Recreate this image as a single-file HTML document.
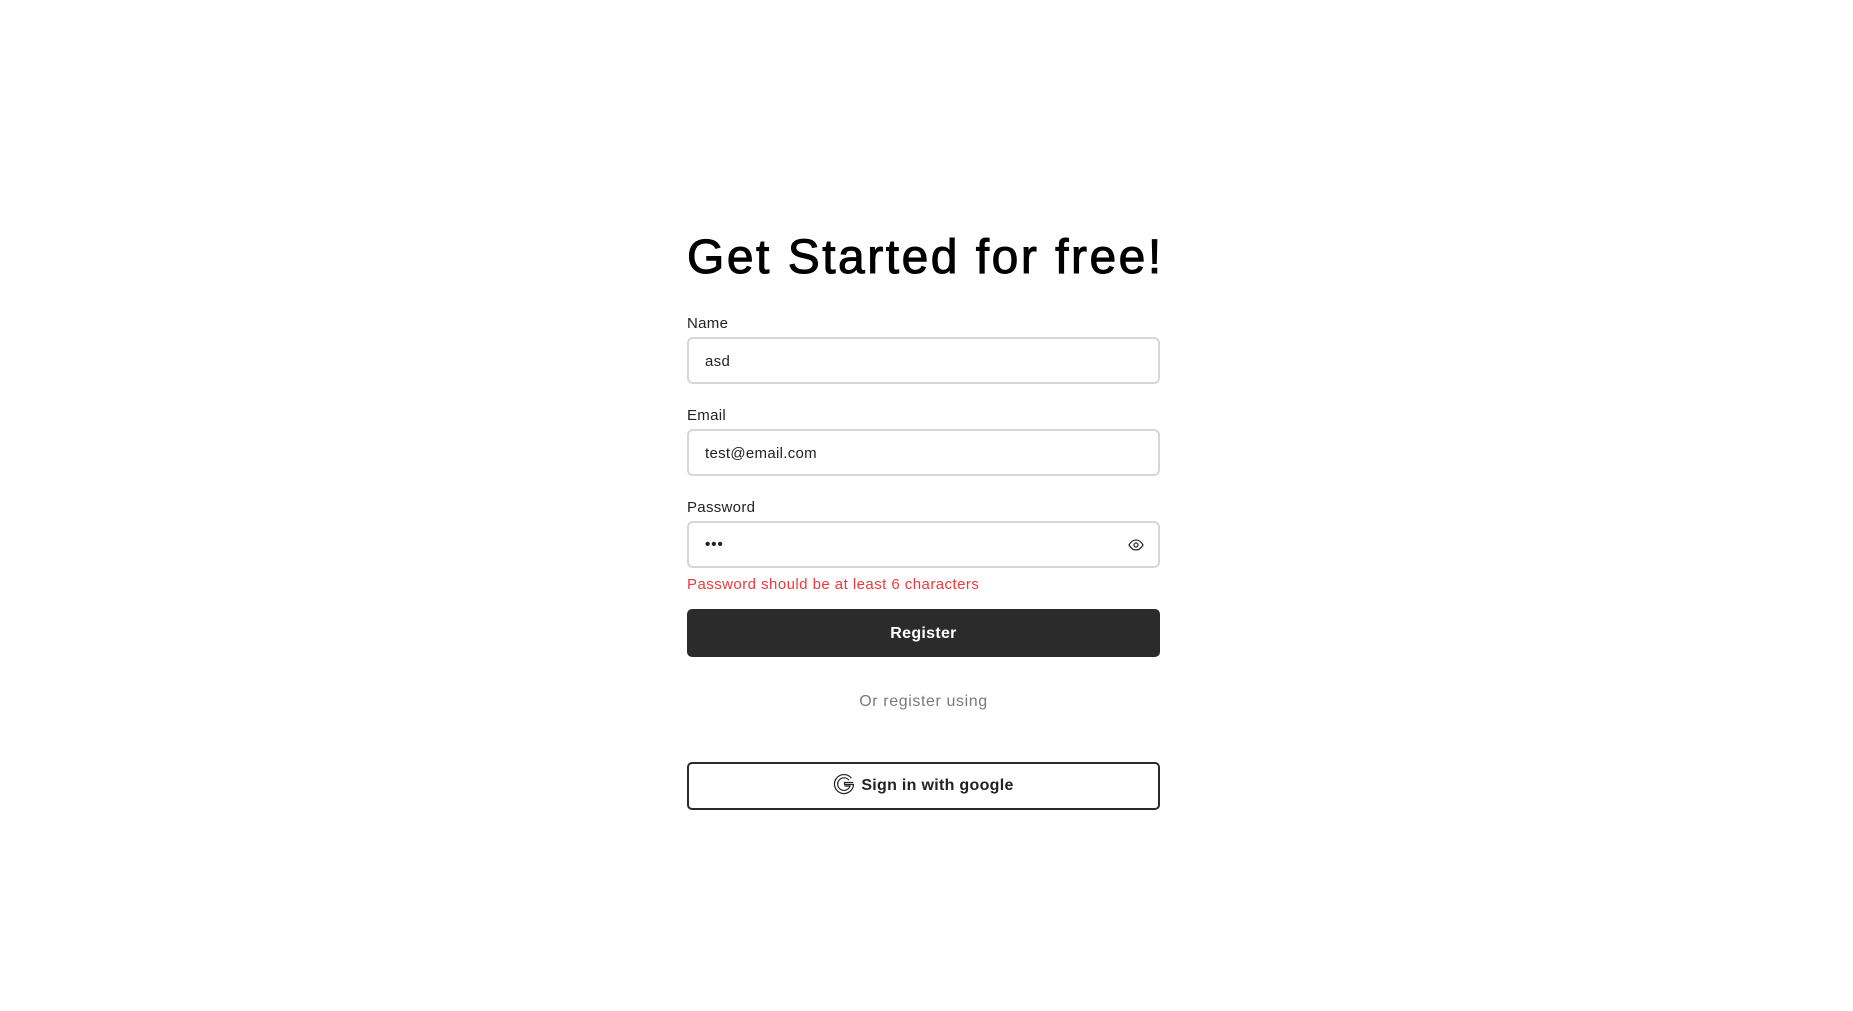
<!DOCTYPE html>
<html><head><meta charset="utf-8"><style>
html,body{margin:0;padding:0;background:#fff;width:1853px;height:1011px;overflow:hidden;font-family:"Liberation Sans",sans-serif;}
h1{position:absolute;left:687px;top:230px;margin:0;font-size:48px;font-weight:normal;color:#000;line-height:56px;letter-spacing:2.5px;white-space:nowrap;-webkit-text-stroke:1px #000;}
.lbl{position:absolute;left:687px;font-size:15px;color:#222;letter-spacing:0.3px;}
.in{position:absolute;left:687px;width:469px;height:43px;border:2px solid #d6d6d6;border-radius:6px;box-sizing:content-box;}
.in span{position:absolute;left:16px;top:14px;font-size:15px;color:#222;letter-spacing:0.3px;}
.err{position:absolute;left:687px;top:576px;font-size:15px;color:#f0383a;letter-spacing:0.45px;}
.reg{position:absolute;left:687px;top:609px;width:473px;height:48px;background:#2b2b2b;border-radius:5px;color:#fff;font-weight:bold;font-size:16px;text-align:center;line-height:49px;letter-spacing:0.3px;}
.or{position:absolute;left:687px;width:473px;top:693px;text-align:center;color:#7a7a7a;font-size:16px;letter-spacing:0.6px;}
.g{position:absolute;left:687px;top:762px;width:469px;height:44px;border:2px solid #2b2b2b;border-radius:5px;text-align:center;line-height:44px;font-weight:bold;font-size:16px;color:#222;letter-spacing:0.3px;}
.g svg{vertical-align:middle;margin-right:6px;position:relative;top:-2px}
</style></head><body>
<h1>Get Started for free!</h1>
<div class="lbl" style="top:315px">Name</div>
<div class="in" style="top:337px"><span>asd</span></div>
<div class="lbl" style="top:407px">Email</div>
<div class="in" style="top:429px"><span>test@email.com</span></div>
<div class="lbl" style="top:499px">Password</div>
<div class="in" style="top:521px"><span style="top:13px;font-weight:bold;letter-spacing:1px">•••</span>
<svg style="position:absolute;right:14px;top:16px" width="16" height="12" viewBox="0 0 16 12"><path d="M1 6C3 2.5 5.5 1 8 1s5 1.5 7 5c-2 3.5-4.5 5-7 5S3 9.5 1 6z" fill="none" stroke="#333" stroke-width="1.3"/><circle cx="8" cy="6" r="2" fill="none" stroke="#333" stroke-width="1.3"/></svg></div>
<div class="err">Password should be at least 6 characters</div>
<div class="reg">Register</div>
<div class="or">Or register using</div>
<div class="g"><svg width="22" height="22" viewBox="0 0 22 22"><path d="M18.5 5.2A9.5 9.5 0 1 0 20.5 11.5H11.5V9.5H20.3" fill="none" stroke="#222" stroke-width="1.2"/><path d="M16 7.3A6.3 6.3 0 1 0 17 13H11.5" fill="none" stroke="#222" stroke-width="1.2"/></svg>Sign in with google</div>
</body></html>
